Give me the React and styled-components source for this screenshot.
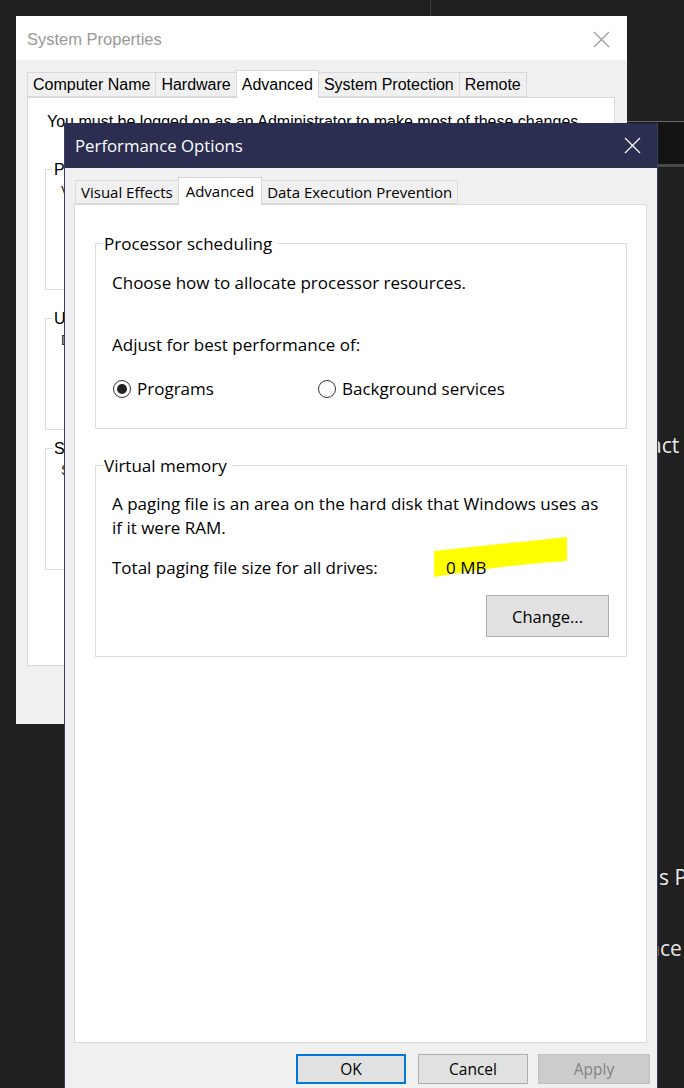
import React from "react";
import styled, { createGlobalStyle } from "styled-components";

const GlobalStyle = createGlobalStyle`
  html, body {
    margin: 0;
    padding: 0;
    background: #202020;
    overflow: hidden;
  }
  * {
    box-sizing: border-box;
  }
`;

const Desktop = styled.div`
  position: relative;
  width: 684px;
  height: 1088px;
  overflow: hidden;
  background: #202020;
  font-family: "Open Sans", "Noto Sans", sans-serif;
`;

const Divider = styled.div`
  position: absolute;
  left: 430px;
  top: 0;
  width: 1px;
  height: 16px;
  background: #3a3a3a;
`;

const DarkBand = styled.div`
  position: absolute;
  left: 627px;
  top: 121px;
  width: 57px;
  height: 46px;
  background: #141414;
  border-top: 1px solid #6a6a6a;
  border-bottom: 3px solid #4a4a4a;
`;

const BgText = styled.span`
  position: absolute;
  left: ${(p) => p.$x}px;
  top: ${(p) => p.$y}px;
  color: #e8e8e8;
  font-size: 21px;
  line-height: 28px;
  white-space: nowrap;
`;

/* ---------- System Properties (behind) ---------- */

const SysWindow = styled.div`
  position: absolute;
  left: 16px;
  top: 16px;
  width: 611px;
  height: 708px;
  background: #f0f0f0;
  display: flex;
  flex-direction: column;
  font-family: "Liberation Sans", Arial, sans-serif;
  font-size: 16px;
  color: #000;
`;

const SysTitleBar = styled.div`
  height: 44px;
  flex-shrink: 0;
  background: #fff;
  display: flex;
  align-items: center;
  justify-content: space-between;
  padding: 2px 17px 0 11px;
  color: #999;
  font-size: 16.5px;
`;

const SysBody = styled.div`
  flex: 1;
  display: flex;
  flex-direction: column;
  padding: 10px 12px 58px 11px;
`;

const TabRow = styled.div`
  display: flex;
  align-items: flex-end;
  padding-left: ${(p) => p.$inset || 0}px;
  position: relative;
  z-index: 1;
`;

const Tab = styled.div`
  position: relative;
  z-index: ${(p) => (p.$active ? 1 : 0)};
  height: ${(p) => (p.$active ? p.$tall : p.$short)}px;
  margin-bottom: ${(p) => (p.$active ? -1 : 0)}px;
  margin-left: -1px;
  padding: 0 ${(p) => p.$pad || 5}px;
  border: 1px solid #d9d9d9;
  border-bottom: ${(p) => (p.$active ? "none" : "1px solid #d9d9d9")};
  background: ${(p) => (p.$active ? "#fff" : "#f0f0f0")};
  display: flex;
  align-items: center;
  white-space: nowrap;
  font-size: ${(p) => p.$size}px;
  line-height: 1;
  &:first-child {
    margin-left: 0;
  }
`;

const Panel = styled.div`
  flex: 1;
  background: #fff;
  border: 1px solid #d9d9d9;
  padding: ${(p) => p.$pad};
  display: flex;
  flex-direction: column;
  overflow: hidden;
`;

const Notice = styled.div`
  margin-top: 14px;
  padding-left: 2px;
  line-height: 20px;
  white-space: nowrap;
`;

const GroupBox = styled.div`
  position: relative;
  flex-shrink: 0;
  border: 1px solid #dcdcdc;
  margin-top: ${(p) => p.$mt}px;
  height: ${(p) => (p.$h ? `${p.$h}px` : "auto")};
  padding: ${(p) => p.$pad || "0"};
`;

const GroupLabel = styled.span`
  position: absolute;
  left: 7px;
  top: -12px;
  padding: 0 6px 0 1px;
  background: #fff;
  line-height: 24px;
  white-space: nowrap;
`;

const SmallLine = styled.div`
  padding: 12px 0 0 15px;
  font-size: 14px;
  line-height: 18px;
  white-space: nowrap;
  color: #222;
`;

/* ---------- Performance Options (front) ---------- */

const PerfWindow = styled.div`
  position: absolute;
  left: 64px;
  top: 123px;
  width: 594px;
  height: 990px;
  background: #f0f0f0;
  border-left: 1px solid #3b3d58;
  border-right: 1px solid #3b3d58;
  display: flex;
  flex-direction: column;
  color: #000;
`;

const PerfTitleBar = styled.div`
  height: 45px;
  flex-shrink: 0;
  background: #2b2e50;
  color: #fff;
  display: flex;
  align-items: center;
  justify-content: space-between;
  padding: 0 16px 0 10px;
  font-size: 16.8px;
`;

const PerfBody = styled.div`
  display: flex;
  flex-direction: column;
  padding: 9px 10px 0 9px;
`;

const PerfPanel = styled(Panel)`
  flex: none;
  height: 839px;
  font-size: 17px;
  line-height: 24px;
`;

const Line = styled.div`
  margin-top: ${(p) => p.$mt || 0}px;
  white-space: nowrap;
`;

const RadioRow = styled.div`
  display: grid;
  grid-template-columns: 205px auto;
  margin-top: 20px;
  align-items: center;
`;

const RadioOption = styled.label`
  display: flex;
  align-items: center;
  gap: 6px;
  padding-left: 1px;
`;

const RadioDot = styled.span`
  width: 18px;
  height: 18px;
  border-radius: 50%;
  border: 1px solid #333;
  display: inline-flex;
  align-items: center;
  justify-content: center;
  &::after {
    content: "";
    width: 10px;
    height: 10px;
    border-radius: 50%;
    background: ${(p) => (p.$checked ? "#222" : "transparent")};
  }
`;

const TotalRow = styled.div`
  display: flex;
  margin-top: 16px;
`;

const TotalLabel = styled.span`
  width: 334px;
  white-space: nowrap;
`;

const Highlighted = styled.span`
  position: relative;
  white-space: nowrap;
`;

const Marker = styled.svg`
  position: absolute;
  left: -12px;
  top: -19px;
  overflow: visible;
`;

const HighlightText = styled.span`
  position: relative;
`;

const ButtonRow = styled.div`
  display: flex;
  justify-content: flex-end;
  margin-top: ${(p) => p.$mt || 0}px;
  margin-right: ${(p) => p.$mr || 0}px;
`;

const Button = styled.button`
  width: ${(p) => p.$w}px;
  height: ${(p) => p.$h}px;
  margin-left: ${(p) => p.$ml || 0}px;
  font-family: "Open Sans", "Noto Sans", sans-serif;
  font-size: ${(p) => p.$size || 16}px;
  background: ${(p) => (p.$disabled ? "#cccccc" : "#e1e1e1")};
  color: ${(p) => (p.$disabled ? "#838383" : "#000")};
  border: ${(p) =>
    p.$primary
      ? "2px solid #0078d7"
      : p.$disabled
      ? "1px solid #bfbfbf"
      : "1px solid #adadad"};
  padding: 0;
  display: flex;
  align-items: center;
  justify-content: center;
`;

function CloseIcon({ color }) {
  return (
    <svg width="17" height="17" viewBox="0 0 17 17">
      <path d="M1 1 L16 16 M16 1 L1 16" stroke={color} strokeWidth="1.2" fill="none" />
    </svg>
  );
}

export default function App() {
  return (
    <Desktop>
      <GlobalStyle />
      <Divider />
      <DarkBand />
      <BgText $x={650} $y={431}>act</BgText>
      <BgText $x={659} $y={863}>s P</BgText>
      <BgText $x={647} $y={934}>nce</BgText>

      <SysWindow>
        <SysTitleBar>
          <span>System Properties</span>
          <CloseIcon color="#9a9a9a" />
        </SysTitleBar>
        <SysBody>
          <TabRow>
            <Tab $size={16} $short={25} $tall={28}>Computer Name</Tab>
            <Tab $size={16} $short={25} $tall={28}>Hardware</Tab>
            <Tab $size={16} $short={25} $tall={28} $active>Advanced</Tab>
            <Tab $size={16} $short={25} $tall={28}>System Protection</Tab>
            <Tab $size={16} $short={25} $tall={28}>Remote</Tab>
          </TabRow>
          <Panel $pad="0 17px">
            <Notice>You must be logged on as an Administrator to make most of these changes.</Notice>
            <GroupBox $mt={37} $h={121}>
              <GroupLabel>Performance</GroupLabel>
              <SmallLine>Visual effects, processor scheduling, memory usage, and virtual memory</SmallLine>
            </GroupBox>
            <GroupBox $mt={28} $h={112}>
              <GroupLabel>User Profiles</GroupLabel>
              <SmallLine>Desktop settings related to your sign-in</SmallLine>
            </GroupBox>
            <GroupBox $mt={18} $h={122}>
              <GroupLabel>Startup and Recovery</GroupLabel>
              <SmallLine>System startup, system failure, and debugging information</SmallLine>
            </GroupBox>
          </Panel>
        </SysBody>
      </SysWindow>

      <PerfWindow>
        <PerfTitleBar>
          <span>Performance Options</span>
          <CloseIcon color="#ffffff" />
        </PerfTitleBar>
        <PerfBody>
          <TabRow $inset={1}>
            <Tab $size={15} $short={24} $tall={28}>Visual Effects</Tab>
            <Tab $size={15} $short={24} $tall={28} $pad={7} $active>Advanced</Tab>
            <Tab $size={15} $short={24} $tall={28}>Data Execution Prevention</Tab>
          </TabRow>
          <PerfPanel $pad="0 19px 0 20px">
            <GroupBox $mt={38} $pad="27px 16px 27px 16px">
              <GroupLabel>Processor scheduling</GroupLabel>
              <Line>Choose how to allocate processor resources.</Line>
              <Line $mt={38}>Adjust for best performance of:</Line>
              <RadioRow>
                <RadioOption>
                  <RadioDot $checked />
                  Programs
                </RadioOption>
                <RadioOption>
                  <RadioDot />
                  Background services
                </RadioOption>
              </RadioRow>
            </GroupBox>
            <GroupBox $mt={36} $pad="26px 0 19px 16px">
              <GroupLabel>Virtual memory</GroupLabel>
              <Line>A paging file is an area on the hard disk that Windows uses as</Line>
              <Line>if it were RAM.</Line>
              <TotalRow>
                <TotalLabel>Total paging file size for all drives:</TotalLabel>
                <Highlighted>
                  <Marker width="133" height="40">
                    <path d="M0 14 L133 0 L133 24 Q70 28 0 40 Z" fill="#ffff00" />
                  </Marker>
                  <HighlightText>0 MB</HighlightText>
                </Highlighted>
              </TotalRow>
              <ButtonRow $mt={15} $mr={17}>
                <Button $w={123} $h={42} $size={16.5}>Change...</Button>
              </ButtonRow>
            </GroupBox>
          </PerfPanel>
          <ButtonRow $mt={11} $mr={-3}>
            <Button $w={110} $h={30} $size={15.5} $primary>OK</Button>
            <Button $w={110} $h={30} $size={15.5} $ml={12}>Cancel</Button>
            <Button $w={112} $h={30} $size={15.5} $ml={10} $disabled>Apply</Button>
          </ButtonRow>
        </PerfBody>
      </PerfWindow>
    </Desktop>
  );
}
